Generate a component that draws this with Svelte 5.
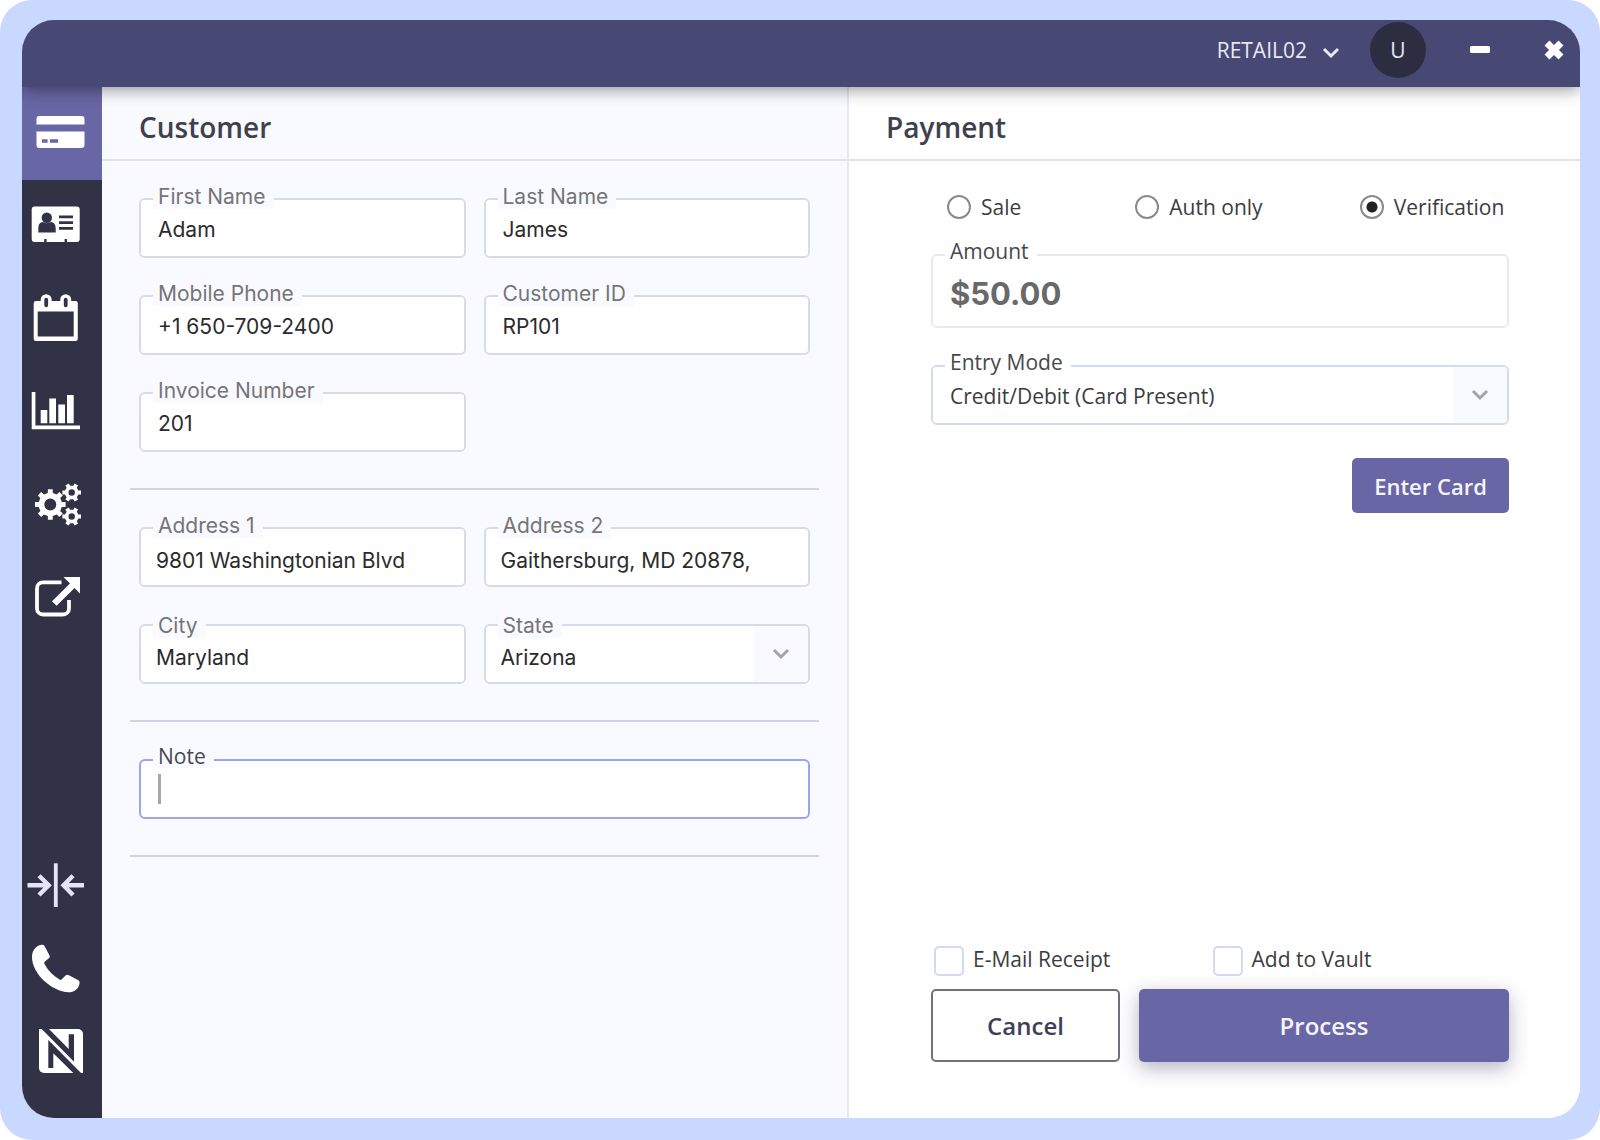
<script>
  const gear = (cx, cy, outer, inner, hole, teeth) => {
    const pt = (r, a) => `${(cx + r * Math.cos(a)).toFixed(2)} ${(cy + r * Math.sin(a)).toFixed(2)}`;
    const step = (Math.PI * 2) / teeth;
    let d = '';
    for (let i = 0; i < teeth; i++) {
      const a = i * step;
      d += `${i ? 'L' : 'M'}${pt(inner, a - step * 0.27)}L${pt(outer, a - step * 0.2)}L${pt(outer, a + step * 0.2)}L${pt(inner, a + step * 0.27)}`;
    }
    return `${d}Z M${cx - hole} ${cy}a${hole} ${hole} 0 1 0 ${hole * 2} 0a${hole} ${hole} 0 1 0 ${-hole * 2} 0Z`;
  };

  const contact = [
    { id: 'first-name', label: 'First Name', value: 'Adam' },
    { id: 'last-name', label: 'Last Name', value: 'James' },
    { id: 'mobile', label: 'Mobile Phone', value: '+1 650-709-2400' },
    { id: 'customer-id', label: 'Customer ID', value: 'RP101' },
    { id: 'invoice', label: 'Invoice Number', value: '201' }
  ];
  const address = [
    { id: 'address-1', label: 'Address 1', value: '9801 Washingtonian Blvd' },
    { id: 'address-2', label: 'Address 2', value: 'Gaithersburg, MD 20878,' },
    { id: 'city', label: 'City', value: 'Maryland' }
  ];
  const modes = ['Sale', 'Auth only', 'Verification'];
  let mode = $state('Verification');
</script>

{#snippet chevron()}
  <svg class="chevron" width="18" height="12" viewBox="0 0 18 12" aria-hidden="true">
    <path d="M2 2l7 7 7-7" fill="none" stroke="currentColor" stroke-width="3" />
  </svg>
{/snippet}

{#snippet textField(f)}
  <div class="field">
    <label for={f.id}>{f.label}</label>
    <input id={f.id} type="text" value={f.value} />
  </div>
{/snippet}

<div class="frame">
  <div class="window">
    <header class="topbar">
      <button class="station" type="button">RETAIL02 {@render chevron()}</button>
      <button class="avatar" type="button" aria-label="User menu">U</button>
      <button class="winbtn" type="button" aria-label="Minimize">
        <svg width="22" height="22" viewBox="0 0 22 22"><rect x="1" y="7" width="20" height="7" rx="1.5" fill="#fff" /></svg>
      </button>
      <button class="winbtn" type="button" aria-label="Close">
        <svg width="22" height="22" viewBox="0 0 22 22"><path d="M4 4l14 14M18 4L4 18" stroke="#fff" stroke-width="7" /></svg>
      </button>
    </header>

    <div class="body">
      <nav class="sidebar">
        <button class="active" type="button" aria-label="Payments">
          <svg viewBox="0 0 60 60">
            <path fill="#fff" d="M9.5 22.5V17a3 3 0 0 1 3-3h42a3 3 0 0 1 3 3v5.5z" />
            <path fill="#fff" fill-rule="evenodd" d="M9.5 29.5h48V43a3 3 0 0 1-3 3h-42a3 3 0 0 1-3-3zM15 37.2v3.6h5.6v-3.6zM23 37.2v3.6h8v-3.6z" />
          </svg>
        </button>
        <button type="button" aria-label="Customers">
          <svg viewBox="0 0 60 60">
            <rect x="4.7" y="11.5" width="48" height="35.5" rx="3" fill="#fff" />
            <g fill="#323247">
              <circle cx="19.8" cy="22.8" r="5.2" />
              <path d="M11.3 37.5v-4c0-4 1.6-6.2 4.6-6.5 2.4 1.5 5.4 1.5 7.8 0 3.2.3 5 2.5 5 6.5v4z" />
              <path d="M32 20.5h14v2.7H32zM32 26.3h14v2.7H32zM32 32.1h14v2.7H32zM17.2 44h2.4v3.5h-2.4zM37.6 44H40v3.5h-2.4z" />
            </g>
          </svg>
        </button>
        <button type="button" aria-label="Calendar">
          <svg viewBox="0 0 60 60">
            <path fill="#fff" fill-rule="evenodd" d="M9 13h39.5a2.3 2.3 0 0 1 2.3 2.3v35.4A2.3 2.3 0 0 1 48.5 53H9a2.3 2.3 0 0 1-2.3-2.3V15.3A2.3 2.3 0 0 1 9 13zM10.7 23.5V48.5h36v-25z" />
            <rect x="15.5" y="8" width="7.4" height="13" rx="3.7" fill="#323247" stroke="#fff" stroke-width="3.6" />
            <rect x="35" y="8" width="7.4" height="13" rx="3.7" fill="#323247" stroke="#fff" stroke-width="3.6" />
          </svg>
        </button>
        <button type="button" aria-label="Reports">
          <svg viewBox="0 0 60 60">
            <path fill="#fff" d="M4.7 11h3.7v33.5H53v3.8H4.7zM13.7 29h6.6v13.3h-6.6zM22.3 17.5H29v24.8h-6.7zM31.3 23.5H38v18.8h-6.7zM40 14h6.7v28.3H40z" />
          </svg>
        </button>
        <button type="button" aria-label="Settings">
          <svg viewBox="0 0 60 60" fill="#fff" fill-rule="evenodd">
            <path d={gear(23.3, 30.5, 15.5, 11.8, 6, 8)} />
            <path d={gear(44.7, 18.5, 9.5, 7, 3.2, 6)} />
            <path d={gear(44.7, 42.5, 9.5, 7, 3.2, 6)} />
          </svg>
        </button>
        <button type="button" aria-label="Open externally">
          <svg viewBox="0 0 60 60">
            <path d="M34.5 15.3H16a6 6 0 0 0-6 6V41.5a6 6 0 0 0 6 6h20a6 6 0 0 0 6-6V33" fill="none" stroke="#fff" stroke-width="3.8" />
            <path d="M27.3 36.5L46 18" stroke="#fff" stroke-width="6.5" />
            <path d="M36.5 10H53v16.5z" fill="#fff" />
          </svg>
        </button>

        <div class="bottom">
          <button type="button" aria-label="Collapse">
            <svg viewBox="0 0 60 60" fill="none" stroke="#e3e4f5">
              <path d="M28.8 8.3V52" stroke-width="3.8" />
              <path d="M.5 30.3H22M12 20.7l9.7 9.6L12 40M57 30.3H37M46 20.7l-9.5 9.6L46 40" stroke-width="4.4" />
            </svg>
          </button>
          <button type="button" aria-label="Phone">
            <svg viewBox="0 0 60 60">
              <path fill="#fff" d="M5 19C5 12.5 9 7.5 14.5 6.8q2.2-.4 3.2 1.4l4.8 9.3q.8 1.5-.4 2.6l-4.4 3.7q-1 .9-.2 2.2C21 32.6 26.5 38 32.6 41.6q1.2.7 2.2-.3l4-4q1.2-1 2.6-.3l10 5.2q1.5 1 1.2 2.8C51.7 51.5 47 54.3 41.500 54.3 25 53.5 5 36 5 19z" />
            </svg>
          </button>
          <button type="button" aria-label="About">
            <svg viewBox="0 0 60 60">
              <path fill="#fff" d="M12 8h39a5 5 0 0 1 5 5v39H17a5 5 0 0 1-5-5z" />
              <path fill="#323247" d="M14.7 8H22l19.7 20V13.3H47v27.4zM21.3 19L54 52h-7.700l-20-19.700V47h-5z" />
            </svg>
          </button>
        </div>
      </nav>

      <section class="panel customer">
        <h2>Customer</h2>
        <form class="sections">
          <div class="group">
            {#each contact as f}{@render textField(f)}{/each}
          </div>
          <div class="group low">
            {#each address as f}{@render textField(f)}{/each}
            <div class="field select">
              <label for="state">State</label>
              <select id="state"><option>Arizona</option><option>Maryland</option></select>
              <span class="drop">{@render chevron()}</span>
            </div>
          </div>
          <div class="group">
            <div class="field note">
              <label for="note">Note</label>
              <span class="caret"></span>
              <input id="note" type="text" />
            </div>
          </div>
        </form>
      </section>

      <section class="panel payment">
        <h2>Payment</h2>
        <form class="pay">
          <div class="modes">
            {#each modes as m}
              <label><input type="radio" name="mode" value={m} bind:group={mode} />{m}</label>
            {/each}
          </div>
          <div class="field amount">
            <label for="amount">Amount</label>
            <input id="amount" type="text" value="$50.00" />
          </div>
          <div class="field select entry">
            <label for="entry">Entry Mode</label>
            <select id="entry"><option>Credit/Debit (Card Present)</option></select>
            <span class="drop">{@render chevron()}</span>
          </div>
          <button class="primary enter" type="button">Enter Card</button>
          <div class="checks">
            <label><input type="checkbox" /><span>E-Mail Receipt</span></label>
            <label><input type="checkbox" /><span>Add to Vault</span></label>
          </div>
          <div class="actions">
            <button class="cancel" type="button">Cancel</button>
            <button class="primary process" type="button">Process</button>
          </div>
        </form>
      </section>
    </div>
  </div>
</div>

<style>
  :global(body) {
    margin: 0;
    background: #fff;
  }
  * {
    box-sizing: border-box;
  }
  button,
  input,
  select {
    font: inherit;
    color: inherit;
    margin: 0;
  }
  button {
    border: 0;
    padding: 0;
    background: none;
    cursor: pointer;
  }
  .frame {
    display: flex;
    min-height: 100vh;
    padding: 20px 20px 22px 22px;
    border-radius: 32px;
    background: #c9d8ff;
    font-family: 'Open Sans', 'Noto Sans', sans-serif;
    font-size: 21px;
    color: #3c3c40;
  }
  .window {
    flex: 1;
    display: flex;
    flex-direction: column;
    overflow: hidden;
    border-radius: 32px;
    background: #fff;
  }
  .topbar {
    position: relative;
    z-index: 1;
    display: flex;
    justify-content: flex-end;
    align-items: center;
    height: 67px;
    padding: 0 15px 7px 0;
    background: #474873;
    box-shadow: 0 2px 16px rgba(0, 0, 0, 0.45);
    color: #e8e8f2;
  }
  .station {
    display: flex;
    align-items: center;
    gap: 15px;
  }
  .station .chevron {
    margin-top: 6px;
  }
  .avatar {
    width: 56px;
    height: 56px;
    margin-left: 30px;
    border-radius: 50%;
    background: #2d2d42;
  }
  .winbtn {
    display: flex;
    margin-left: 43px;
  }
  .winbtn + .winbtn {
    margin-left: 52px;
  }
  .body {
    flex: 1;
    display: grid;
    grid-template-columns: 80px 747fr 731fr;
  }
  .sidebar {
    display: flex;
    flex-direction: column;
    padding-bottom: 26px;
    background: #323247;
  }
  .sidebar button {
    display: flex;
    align-items: center;
    width: 100%;
    height: 93px;
    padding: 0 0 3px 5px;
  }
  .sidebar svg {
    width: 60px;
    height: 60px;
  }
  .sidebar .active {
    background: #6866a4;
  }
  .bottom {
    margin-top: auto;
  }
  .sidebar .bottom button {
    height: 83px;
    padding-bottom: 0;
  }
  .panel {
    --surface: #fff;
    display: flex;
    flex-direction: column;
    min-width: 0;
    background: var(--surface);
  }
  .customer {
    --surface: #f9faff;
    border-right: 2px solid #e6e8f6;
  }
  h2 {
    height: 74px;
    margin: 0;
    padding: 0 37px;
    border-bottom: 2px solid #dfe2f0;
    font-size: 28px;
    font-weight: 600;
    line-height: 80px;
    color: #40414c;
  }
  .sections {
    padding: 0 28px;
    font-family: Inter, sans-serif;
    color: #2b2b2b;
  }
  .group {
    display: grid;
    grid-template-columns: repeat(2, minmax(0, 1fr));
    gap: 37px 18px;
    padding: 37px 9px 36px;
    border-bottom: 2px solid #cfd3e9;
  }
  .field {
    --line: #d6daed;
    position: relative;
    display: flex;
    height: 60px;
    border: 2px solid var(--line);
    border-radius: 6px;
    background: #fff;
  }
  .field label {
    position: absolute;
    top: -15px;
    left: 12px;
    padding: 0 8px 0 5px;
    background: var(--surface);
    line-height: 24px;
    color: #757575;
  }
  .low .field:nth-child(n + 3) label {
    top: -12px;
  }
  .field input,
  .field select {
    flex: 1;
    min-width: 0;
    padding: 3px 17px 0;
    border: 0;
    border-radius: 4px;
    outline: 0;
    appearance: none;
    background: #fff;
  }
  .low input,
  .low select {
    padding: 7px 15px 0;
  }
  .drop {
    position: absolute;
    inset: 0 0 0 auto;
    display: flex;
    align-items: center;
    justify-content: center;
    width: 54px;
    border-radius: 0 4px 4px 0;
    background: #f9faff;
    color: #9fa4ad;
    pointer-events: none;
  }
  .note {
    --line: #97a5f5;
    grid-column: 1 / -1;
    align-items: center;
  }
  .note label,
  .pay .field label {
    top: -17px;
    font-family: 'Open Sans', 'Noto Sans', sans-serif;
    color: #48484c;
  }
  .caret {
    width: 3px;
    height: 30px;
    margin-left: 17px;
    background: #a6a6a6;
  }
  .pay {
    flex: 1;
    display: flex;
    flex-direction: column;
    padding: 31px 71px 56px 82px;
  }
  .modes {
    display: grid;
    grid-template-columns: 188fr 224fr 149fr;
    padding-left: 16px;
    margin-bottom: 32px;
  }
  .modes label,
  .checks label {
    display: flex;
    align-items: center;
    height: 30px;
    white-space: nowrap;
  }
  .modes input {
    width: 24px;
    height: 24px;
    margin-right: 10px;
    border: 2px solid #8a8a8a;
    border-radius: 50%;
    appearance: none;
  }
  .modes input:checked {
    background: radial-gradient(circle, #222 5px, transparent 6px);
  }
  .amount {
    --line: #e6e8f5;
    height: 74px;
    margin-bottom: 37px;
  }
  .amount input {
    padding-top: 5px;
    font-family: Inter, sans-serif;
    font-size: 31px;
    font-weight: 700;
    color: #696969;
  }
  .entry {
    margin-bottom: 33px;
  }
  .entry select {
    padding-top: 1px;
  }
  .primary {
    border-radius: 5px;
    background: #6866a4;
    color: #f4f4fb;
    font-weight: 600;
  }
  .enter {
    align-self: flex-end;
    width: 157px;
    height: 55px;
    font-size: 22px;
  }
  .checks {
    display: grid;
    grid-template-columns: 279fr 297fr;
    margin-top: auto;
    margin-bottom: 13px;
    padding-left: 3px;
  }
  .checks input {
    width: 30px;
    height: 30px;
    margin-right: 9px;
    border: 2px solid #d6d8ee;
    border-radius: 5px;
    appearance: none;
    background: #fff;
  }
  .checks span {
    padding-bottom: 4px;
  }
  .actions {
    display: grid;
    grid-template-columns: 189fr 370fr;
    gap: 19px;
  }
  .actions button {
    height: 73px;
    font-size: 24px;
    font-weight: 600;
  }
  .actions .cancel {
    border: 2px solid #70707f;
    border-radius: 5px;
    color: #3f4058;
  }
  .process {
    box-shadow: 0 6px 20px rgba(40, 35, 80, 0.35);
  }
</style>
